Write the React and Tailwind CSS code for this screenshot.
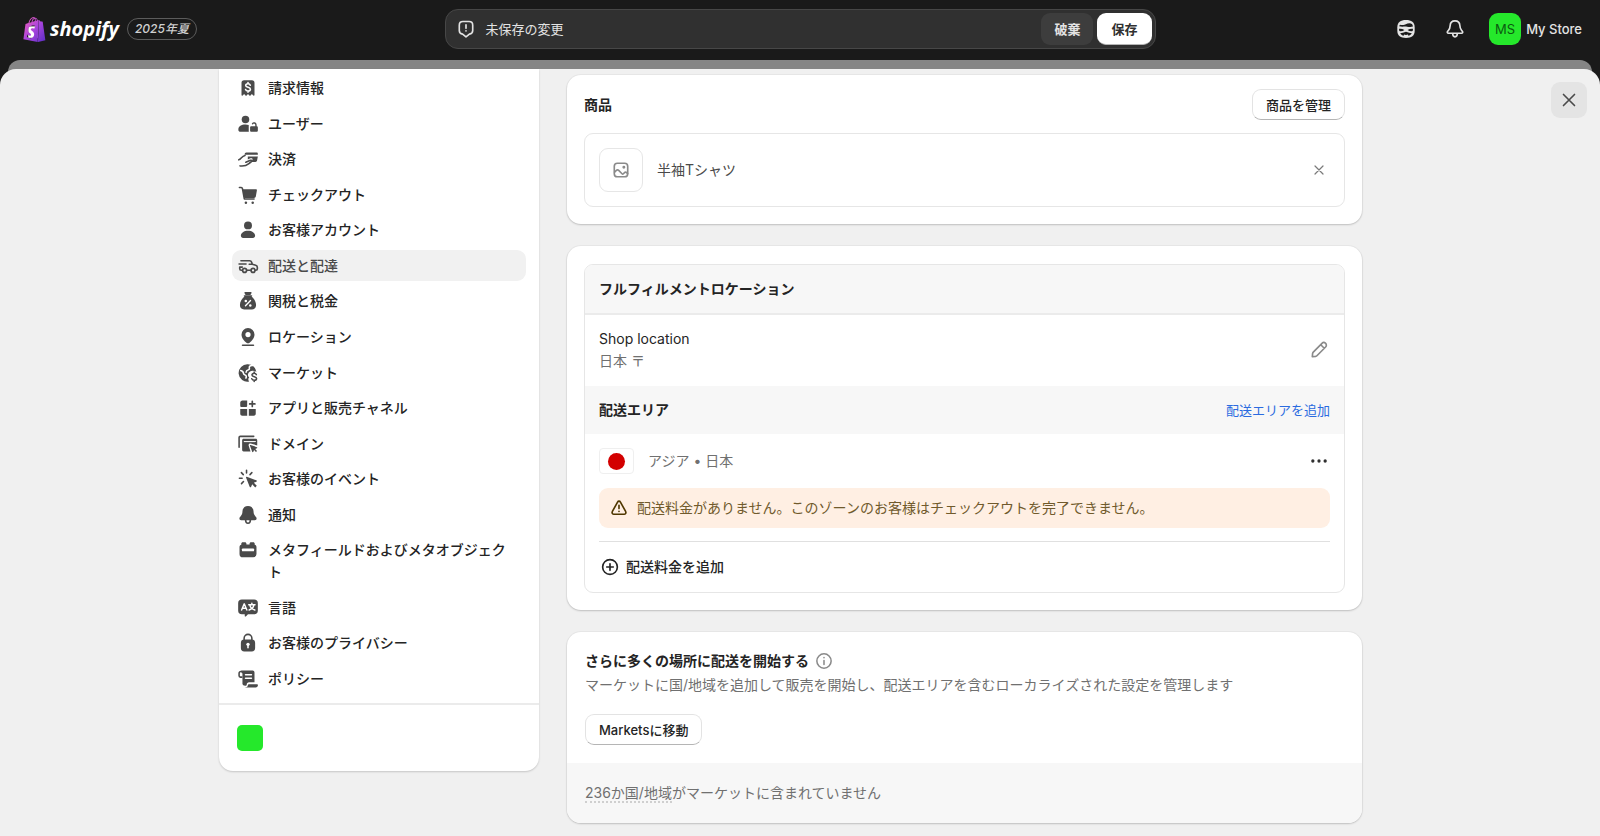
import { SiShopify } from 'react-icons/si';

const Svg = ({ children, className = 'size-[22px]' }) => (
  <svg viewBox="0 0 20 20" className={`${className} shrink-0`} fill="currentColor" aria-hidden="true">
    {children}
  </svg>
);

const NavSvg = ({ children }) => (
  <svg viewBox="-0.5 -0.5 21 21" className="size-[22px] shrink-0" fill="currentColor" aria-hidden="true">
    {children}
  </svg>
);

const Line = ({ children, className, width = 1.5 }) => (
  <svg
    viewBox="0 0 20 20"
    className={`${className || 'size-[22px]'} shrink-0`}
    fill="none"
    stroke="currentColor"
    strokeWidth={width}
    strokeLinecap="round"
    strokeLinejoin="round"
    aria-hidden="true"
  >
    {children}
  </svg>
);

const ReceiptIcon = () => (
  <NavSvg>
    <path d="M6.300 2.500h7.400a2.500 2.500 0 0 1 2.500 2.500v11.600c0 .6-.7.9-1.100.5l-1.400-1.300-1.300 1.300a.8.8 0 0 1-1.100 0L10 15.800l-1.300 1.300a.8.8 0 0 1-1.100 0l-1.300-1.300-1.400 1.300c-.4.4-1.100.1-1.100-.5V5a2.500 2.500 0 0 1 2.500-2.500z" />
    <path d="M12.200 7.300c-.3-.9-1.200-1.400-2.200-1.400-1.200 0-2.200.6-2.200 1.700 0 2.400 4.500 1.100 4.500 3.500 0 1.100-1.100 1.700-2.300 1.700-1.100 0-2-.5-2.300-1.400M10 4.700v1.200M10 12.800v1.200" fill="none" stroke="#fff" strokeWidth="1.500" strokeLinecap="round" />
  </NavSvg>
);

const UsersIcon = () => (
  <NavSvg>
    <circle cx="7.600" cy="5.800" r="3.600" />
    <path d="M.8 15.200c0-3 2.800-4.700 6.800-4.700 1.200 0 2.200.2 3.100.5v5.700c0 .3.100.6.200.8H2.800c-1.100 0-2-.8-2-1.700z" />
    <path d="M12 13.400c0-.7.500-1.200 1.200-1.200h5c.7 0 1.200.5 1.200 1.200v2.900c0 .7-.5 1.200-1.200 1.200h-5c-.7 0-1.200-.5-1.200-1.200z" />
    <path d="M17.600 12.500v-1.800a1.800 1.800 0 0 0-3.300-.9" fill="none" stroke="currentColor" strokeWidth="1.300" strokeLinecap="round" />
  </NavSvg>
);

const PaymentIcon = () => (
  <NavSvg>
    <path d="M8.400 3.900h9.800c.7 0 1.200.5 1.200 1.200v.8H6.700c.2-1.200.7-2 1.700-2z" />
    <path d="M9.800 7.500h9.600l-.7 3.800c-.1.900-.8 1.500-1.600 1.500h-4.300c1.100-1 1.900-2.200 1.400-3-.6-.9-2.400-.2-4.400.7z" />
    <path d="M1.200 10.800c2.200-.5 2.600-3.500 6-4.200M2.400 16.600c6.300.9 7.200-1.500 10.200-3.500 1.500-1 1.200-2.300-.3-1.800l-4.400 1.800" fill="none" stroke="currentColor" strokeWidth="1.500" strokeLinecap="round" />
  </NavSvg>
);

const CartIcon = () => (
  <NavSvg>
    <path d="M1.800 2.900h1.700c.6 0 1.100.4 1.200 1L6.500 13.800h9.300" fill="none" stroke="currentColor" strokeWidth="1.500" strokeLinecap="round" strokeLinejoin="round" />
    <path d="M4.900 4.400h12.700c.6 0 1 .5.900 1.100l-1 5.800c-.1.900-.9 1.500-1.700 1.500H6.400z" />
    <circle cx="8" cy="17.300" r="1.200" />
    <circle cx="14.500" cy="17.300" r="1.200" />
  </NavSvg>
);

const PersonIcon = () => (
  <NavSvg>
    <circle cx="10" cy="5.600" r="3.800" />
    <path d="M3.200 15.600c0-3.100 3-5 6.800-5s6.800 1.900 6.800 5c0 1.200-.9 2.100-2.100 2.100H5.300c-1.200 0-2.100-.9-2.100-2.100z" />
  </NavSvg>
);

const TruckIcon = () => (
  <Line>
    <path d="M3.600 5.200h7.900c1 0 1.500.4 1.800 1.300l.6 1.900 3.100.9c1 .3 1.500 1 1.500 2v1.200c0 .8-.5 1.400-1.300 1.400h-.7M12.600 13.900H9M1.900 8.200h6.300M4.900 13.900H3.800c-.8 0-1.300-.5-1.300-1.300V11h2.300M14 8.400h-2.900" />
    <circle cx="6.900" cy="14" r="1.800" />
    <circle cx="14.600" cy="14" r="1.800" />
  </Line>
);

const TaxIcon = () => (
  <NavSvg>
    <path d="M7.300 1.300h5.400c.6 0 .9.700.6 1.200l-1 1.700H7.700l-1-1.700c-.3-.5 0-1.200.6-1.200z" />
    <path d="M5.900 5.100c0-.4.3-.7.700-.7h6.800c.4 0 .7.300.7.700 0 .5-.3.700-.7.700 2.300 2 4.300 5 4.300 8 0 2.700-1.600 4.200-4 4.200H6.300c-2.400 0-4-1.500-4-4.200 0-3 2-6 4.300-8-.4 0-.7-.2-.7-.7z" />
    <path d="m7.600 14.500 4.800-5" stroke="#fff" strokeWidth="1.300" strokeLinecap="round" />
    <circle cx="7.900" cy="10" r="1.200" fill="#fff" />
    <circle cx="12.200" cy="14.200" r="1.200" fill="#fff" />
  </NavSvg>
);

const PinIcon = () => (
  <NavSvg>
    <path fillRule="evenodd" d="M10 1.500a6.200 6.200 0 0 1 6.200 6.200c0 3.400-2.600 6.200-4.700 7.700a2.500 2.500 0 0 1-3 0C6.400 13.900 3.800 11.100 3.800 7.700A6.200 6.200 0 0 1 10 1.500zm0 3.700a2.500 2.500 0 1 0 0 5 2.500 2.500 0 0 0 0-5z" />
    <path d="M4.800 17.900h10.400" stroke="currentColor" strokeWidth="1.500" strokeLinecap="round" />
  </NavSvg>
);

const MarketIcon = () => (
  <NavSvg>
    <path d="M9.800 1.700a8.300 8.300 0 1 0 1.300 16.400c-.5-.6-.8-1.300-.8-2 0-.8.300-1.400.9-1.800-.9-.8-1.400-1.900-1.200-3.200.4-2.100 2.300-3.300 4.500-3.300 1.200 0 2.500.4 3.500 1.300A8.300 8.300 0 0 0 9.800 1.700z" />
    <path d="M14.300 2.900c-2.400-.2-3.400.9-3 2.300.3 1.100-.3 1.700-1.400 1.900-1.300.2-1.600 1.100-1.700 2.200M3 7.600c1.900.4 2.500 1.300 2.600 2.500.1 1 .7 1.400 1.600 1.700 1.300.4 1.400 1.800.8 3.100" fill="none" stroke="#fff" strokeWidth="1.500" strokeLinecap="round" />
    <path d="M17.900 11.500c-.3-.8-1.100-1.200-2.100-1.200-1.200 0-2 .6-2 1.600 0 2.200 4.400 1 4.400 3.300 0 1-1 1.700-2.300 1.700-1.100 0-1.900-.5-2.300-1.400M15.900 9.100v1.200M15.900 16.900v1.200" fill="none" stroke="currentColor" strokeWidth="1.500" strokeLinecap="round" />
  </NavSvg>
);

const AppsIcon = () => (
  <NavSvg>
    <path d="M2.600 5c0-1.200.9-2.100 2.100-2.100H9.200v5c0 .7-.5 1.200-1.200 1.200H3.800c-.7 0-1.200-.5-1.200-1.200z" />
    <path d="M2.600 10.900h6.600v6.500H4.500c-1.100 0-1.900-.8-1.900-1.900z" />
    <path d="M10.800 10.900h6.600v4.600c0 1.100-.8 1.900-1.900 1.900h-4.700z" />
    <path d="M14.100 3.600v5M11.600 6.100h5" stroke="currentColor" strokeWidth="1.600" strokeLinecap="round" />
  </NavSvg>
);

const DomainIcon = () => (
  <NavSvg>
    <path d="M1.500 13V3.900c0-.7.500-1.200 1.200-1.200h12.800" fill="none" stroke="currentColor" strokeWidth="1.500" strokeLinecap="round" />
    <path d="M4.400 6.500c0-.8.600-1.400 1.400-1.400h11.600c.8 0 1.400.6 1.400 1.400v4.900l-6.300-1.900c-1.200-.3-2.200.7-1.900 1.900l1.800 5.700H5.800c-.8 0-1.400-.6-1.400-1.400z" />
    <path d="M6 7.700h11.400" stroke="#fff" strokeWidth="1" />
    <path d="M12.400 10.900 18.500 13c.5.200.5.900 0 1.100l-1.600.7 1.700 1.800-1 1-1.800-1.800-.7 1.700c-.2.500-.9.500-1.100-.1l-2.200-6c-.1-.4.200-.7.600-.5z" />
  </NavSvg>
);

const EventsIcon = () => (
  <NavSvg>
    <path d="M8.800 7.900 17.900 11.200c.7.300.7 1.100 0 1.400l-2.300 1 2.800 2.900-1.500 1.500-2.900-2.900-1 2.400c-.3.700-1.200.6-1.400 0L8.100 8.600c-.1-.5.200-.8.700-.7z" />
    <path d="M8.600 1.700v2.600M1.800 9.200h2.600M3.700 3.900l1.800 1.900M13.700 3.900l-1.800 1.900M5.700 12.400 3.800 14.400" stroke="currentColor" strokeWidth="1.500" strokeLinecap="round" />
  </NavSvg>
);

const BellFilledIcon = () => (
  <NavSvg>
    <path d="M10 1.300c3.300 0 5.200 2.200 5.300 5.400.1 2 .4 2.900 1.700 4.500l.8 1c.9 1.200.2 2.700-1.300 2.700H3.500c-1.500 0-2.200-1.500-1.300-2.700l.8-1c1.300-1.600 1.600-2.500 1.700-4.500C4.800 3.500 6.700 1.300 10 1.300z" />
    <path d="M7.700 14.500c0 2 .9 3.300 2.300 3.300s2.300-1.300 2.300-3.300" fill="none" stroke="currentColor" strokeWidth="1.500" />
  </NavSvg>
);

const MetaIcon = () => (
  <NavSvg>
    <path d="M5 2.500h2.100c.8 0 1.400.6 1.400 1.400v.8h3v-.8c0-.8.600-1.400 1.400-1.400H15c.8 0 1.400.6 1.400 1.400v1.200c1 .3 1.700 1.100 1.700 2.200v6.500a3.200 3.200 0 0 1-3.200 3.200H5.100a3.200 3.200 0 0 1-3.200-3.200V7.300c0-1.100.7-1.900 1.700-2.200V3.900c0-.8.600-1.400 1.400-1.400z" />
    <rect x="4.200" y="8.600" width="11.600" height="2.700" rx=".8" fill="#fff" />
  </NavSvg>
);

const LanguageIcon = () => (
  <NavSvg>
    <path d="M4.200 1.900h11.600a3.600 3.600 0 0 1 3.600 3.600v6.900a3.600 3.600 0 0 1-3.600 3.600H10l-2.100 2c-.4.400-1 .2-1-.4V16H4.200A3.600 3.600 0 0 1 .6 12.400V5.500a3.600 3.600 0 0 1 3.600-3.600z" />
    <g fill="none" stroke="#fff" strokeWidth="1.400" strokeLinecap="round" strokeLinejoin="round">
      <path d="M3.900 11.900 6.400 6l2.500 5.900M4.800 10.200h3.300" />
      <path d="M10.700 7h6M13.700 5.400V7M15.600 7.300c-.5 2.300-2.100 3.900-4.500 4.600M11.800 7.300c.5 2.300 2.100 3.900 4.700 4.600" />
    </g>
  </NavSvg>
);

const LockIcon = () => (
  <NavSvg>
    <path d="M6.300 8.500V5.500a3.700 3.700 0 0 1 7.400 0v3" fill="none" stroke="currentColor" strokeWidth="1.500" />
    <rect x="3.200" y="6.700" width="13.600" height="11.300" rx="3.300" />
    <circle cx="10" cy="11.300" r="1.600" fill="#fff" />
    <path d="M10 12v2.600" stroke="#fff" strokeWidth="1.500" strokeLinecap="round" />
  </NavSvg>
);

const PolicyIcon = () => (
  <NavSvg>
    <path d="M4.700 8.200H2.700a1.200 1.200 0 0 1-1.200-1.200V4.600a1.700 1.700 0 0 1 3.400 0" fill="none" stroke="currentColor" strokeWidth="1.500" />
    <path d="M3.200 2h11.200c1 0 1.800.8 1.800 1.800v9.400H11c-1.300 0-2.200.9-2.200 2.200 0 1.500-4.100 1.300-4.100-.9V4.500c0-1.100-.5-2-1.500-2.500z" />
    <path d="M7.600 5.900h5.700M7.600 9.200h5.700" stroke="#fff" strokeWidth="1.400" strokeLinecap="round" />
    <path d="M6.900 18.100c1.600 0 2.900-.7 3-2.400 0-.5.400-.8.900-.8h7.800c.6 0 .9.300.9.900 0 1.400-.9 2.300-2.200 2.300z" />
  </NavSvg>
);

const SidekickIcon = () => (
  <Svg>
    <path d="M10 1.900c4.900 0 7.900 2.100 7.900 6.600v3.200c0 4.500-3 6.500-7.900 6.500s-7.900-2-7.900-6.500V8.500c0-4.500 3-6.600 7.900-6.600z" />
    <g fill="#1a1a1a">
      <path d="M4.600 6.100c1.300.4 3 .3 4.700-.3 2.300-.8 4.500-1.500 6-.3.700.6.900 1.400 1 2.200-1.500.6-3.300.4-5.300.2-2.500-.2-5.100.2-7.200-.3.100-.6.400-1.100.8-1.500z" />
      <path d="M3.700 9.800c1.700-.2 3.300.1 4.900 1-1.400 1-3 1.400-4.600 1-.3-.6-.4-1.300-.3-2zM16.300 9.800c-1.700-.2-3.300.1-4.900 1 1.400 1 3 1.400 4.600 1 .3-.6.400-1.300.3-2z" />
      <path d="M4.700 13.800c1.700 0 3.200-.5 5.300-1.300 2.100.8 3.600 1.300 5.300 1.300-.9 1.300-2 2-3.200 2.300l-.3-1c-1.100.6-2.500.6-3.600 0l-.3 1c-1.200-.3-2.300-1-3.200-2.300z" />
    </g>
  </Svg>
);

const BellIcon = () => (
  <Line>
    <path d="M10 2.600c2.700 0 4.300 1.800 4.400 4.300.1 2 .4 2.900 1.500 4.300l.9 1.100c.5.700.1 1.600-.8 1.600H4c-.9 0-1.300-.9-.8-1.600l.9-1.100c1.100-1.400 1.400-2.300 1.500-4.300.1-2.500 1.700-4.300 4.400-4.300zM7.900 14.200c0 1.700.8 2.900 2.100 2.900s2.100-1.200 2.100-2.900" />
  </Line>
);

const UnsavedIcon = () => (
  <Line className="size-[22px]">
    <path d="M7.200 3.200h5.600c1.900 0 3.300 1.400 3.300 3.300v4.900c0 1.800-1.200 3.100-3 3.300L10 17.100l-3.100-2.400c-1.800-.2-3-1.500-3-3.300V6.500c0-1.900 1.400-3.300 3.300-3.300zM10 6.200v3.200M10 11.700v.1" />
  </Line>
);

const CloseIcon = ({ className }) => (
  <Line className={className}>
    <path d="m5 5 10 10M15 5 5 15" />
  </Line>
);

const ImageIcon = () => (
  <Line className="size-[22px]">
    <rect x="3.900" y="3.900" width="12.200" height="12.200" rx="2.800" />
    <path d="M4.200 11.900l1.600-1.500c.6-.6 1.500-.6 2.100 0l3 3c.4.400.9.400 1.300 0l1-1c.6-.6 1.300-.6 1.900 0l.9.900" />
    <circle cx="12.600" cy="7.400" r=".6" fill="currentColor" />
  </Line>
);

const PencilIcon = () => (
  <Line>
    <path d="m3.900 16.100.3-3c.1-.5.300-.9.600-1.200l7.900-7.900a2.300 2.300 0 0 1 3.300 3.300l-7.900 7.900c-.3.300-.8.500-1.200.6zM11.600 5.200l3.200 3.200" />
  </Line>
);

const DotsIcon = () => (
  <Svg>
    <circle cx="4.400" cy="10" r="1.500" />
    <circle cx="10" cy="10" r="1.500" />
    <circle cx="15.600" cy="10" r="1.500" />
  </Svg>
);

const WarningIcon = () => (
  <Line>
    <path d="M8.700 4.600c.6-1.100 2-1.100 2.600 0l4.700 8.500c.7 1.200-.1 2.600-1.400 2.600H5.400c-1.300 0-2.100-1.400-1.400-2.600zM10 7.600v2.900M10 13v.1" />
  </Line>
);

const PlusCircleIcon = () => (
  <Line className="size-[22px]">
    <circle cx="10" cy="10" r="6.700" />
    <path d="M10 7v6M7 10h6" />
  </Line>
);

const InfoIcon = () => (
  <Line className="size-[22px]" width={1.400}>
    <circle cx="10" cy="10" r="6.500" />
    <path d="M10 9.600v3.500M10 6.900v.1" />
  </Line>
);

const navItems = [
  ['請求情報', ReceiptIcon],
  ['ユーザー', UsersIcon],
  ['決済', PaymentIcon],
  ['チェックアウト', CartIcon],
  ['お客様アカウント', PersonIcon],
  ['配送と配達', TruckIcon, true],
  ['関税と税金', TaxIcon],
  ['ロケーション', PinIcon],
  ['マーケット', MarketIcon],
  ['アプリと販売チャネル', AppsIcon],
  ['ドメイン', DomainIcon],
  ['お客様のイベント', EventsIcon],
  ['通知', BellFilledIcon],
  ['メタフィールドおよびメタオブジェクト', MetaIcon],
  ['言語', LanguageIcon],
  ['お客様のプライバシー', LockIcon],
  ['ポリシー', PolicyIcon],
];

function ShopifyLogo() {
  return (
    <a href="#home" className="flex items-center gap-[3px] text-white">
      <svg viewBox="0 0 24 24" className="size-[25px]" aria-hidden="true">
        <defs>
          <linearGradient id="bag" x1="0" y1="0" x2="1" y2="1">
            <stop offset="0.1" stopColor="#e85bbd" />
            <stop offset="0.5" stopColor="#a945dd" />
            <stop offset="1" stopColor="#5a2cc4" />
          </linearGradient>
        </defs>
        <path d="M6 9h9v11H6z" fill="#fff" />
        <SiShopify size={24} style={{ fill: 'url(#bag)' }} />
      </svg>
      <span className="font-['Open_Sans'] text-[20px] leading-7 font-bold italic">shopify</span>
    </a>
  );
}

function TopBar() {
  return (
    <header className="grid h-[60px] grid-cols-[1fr_minmax(0,711px)_1fr] items-center px-[18px] pb-[2px] text-[#e3e3e3]">
      <div className="flex items-center gap-2 pl-1">
        <ShopifyLogo />
        <span className="rounded-full border border-[#5c5c5c] px-[7px] text-[12px] leading-[20px] font-medium italic text-[#d0d0d0]">
          2025年夏
        </span>
      </div>
      <div className="flex h-10 items-center rounded-[13px] border border-[#474747] bg-[#303030] pr-[3px] pl-[9px]">
        <UnsavedIcon />
        <p className="flex-1 pl-[9px] text-[13px]">未保存の変更</p>
        <button type="button" className="h-8 rounded-[9px] bg-[#3d3d3d] px-[13px] text-[13px] font-bold">
          破棄
        </button>
        <button type="button" className="ml-1 h-8 rounded-[9px] border-b border-[#b5b5b5] bg-white px-[14px] text-[13px] font-bold text-[#303030]">
          保存
        </button>
      </div>
      <div className="flex items-center justify-end">
        <button type="button" aria-label="Sidekick">
          <SidekickIcon />
        </button>
        <button type="button" aria-label="通知" className="ml-[27px]">
          <BellIcon />
        </button>
        <button type="button" className="ml-[23px] flex items-center gap-[5px] text-[13px] font-medium">
          <span className="grid size-8 place-items-center rounded-[9px] bg-[#25e82b] font-normal text-[#0b5a10]">MS</span>
          My Store
        </button>
      </div>
    </header>
  );
}

function Sidebar() {
  return (
    <aside className="rounded-b-[14px] bg-white shadow-[0_1px_2px_#0000002e]">
      <nav aria-label="設定">
        <ul className="flex min-h-[634px] flex-col justify-between px-[13px] pt-[3px] pb-[9px]">
          {navItems.map(([label, Icon, active]) => (
            <li key={label}>
              <a
                href={`#${label}`}
                aria-current={active ? 'page' : undefined}
                className={`flex gap-[9px] rounded-[9px] pt-[5px] pr-3 pb-1 pl-[5px] font-medium ${
                  active ? 'bg-[#f1f1f1] text-[#4a4a4a]' : 'text-[#242424]'
                }`}
              >
                <span className="text-[#4a4a4a]">
                  <Icon />
                </span>
                {label}
              </a>
            </li>
          ))}
        </ul>
      </nav>
      <div className="border-t-2 border-[#ebebeb] px-[18px] py-5">
        <span className="block size-[26px] rounded-[5px] bg-[#25e82b]" />
      </div>
    </aside>
  );
}

const card = 'rounded-[14px] bg-white shadow-[0_1px_2px_#0000002e,0_0_0_1px_#e8e8e8]';
const button =
  'h-[31px] rounded-[9px] border border-[#e3e3e3] border-b-[#b5b5b5] bg-white px-[13px] text-[13px] font-medium text-[#242424]';

function ProductsCard() {
  return (
    <section className={`${card} px-[17px] pt-[14px] pb-[17px]`}>
      <div className="flex items-center justify-between">
        <h2 className="font-bold">商品</h2>
        <button type="button" className={button}>商品を管理</button>
      </div>
      <div className="mt-[13px] flex items-center rounded-[9px] border border-[#e6e6e6] p-[14px]">
        <span className="grid size-[44px] place-items-center rounded-[9px] border border-[#e6e6e6] text-[#8a8a8a]">
          <ImageIcon />
        </span>
        <p className="flex-1 pl-[14px] text-[#4a4a4a]">半袖Tシャツ</p>
        <button type="button" aria-label="削除" className="grid size-[22px] place-items-center text-[#7a7a7a]">
          <CloseIcon className="size-4" />
        </button>
      </div>
    </section>
  );
}

function LocationCard() {
  return (
    <section className={`${card} p-[17px] pt-[18px]`}>
      <div className="overflow-hidden rounded-[9px] border border-[#e6e6e6]">
        <h2 className="border-b-2 border-[#ebebeb] bg-[#f7f7f7] px-[14px] py-[13px] font-bold">フルフィルメントロケーション</h2>
        <div className="flex items-center justify-between px-[14px] pt-[13px] pb-[14px]">
          <div>
            <p>Shop location</p>
            <p className="text-[#707070]">日本 〒</p>
          </div>
          <button type="button" aria-label="編集" className="text-[#8a8a8a]">
            <PencilIcon />
          </button>
        </div>
        <div className="flex items-center justify-between bg-[#f7f7f7] px-[14px] py-[13px]">
          <h3 className="font-bold">配送エリア</h3>
          <a href="#add-zone" className="text-[13px] text-[#2b6be0]">配送エリアを追加</a>
        </div>
        <div className="p-[14px]">
          <div className="flex items-center">
            <span className="grid h-[26px] w-[35px] place-items-center rounded-[4px] border border-[#efefef]">
              <span className="size-[17px] rounded-full bg-[#d30000]" />
            </span>
            <p className="flex-1 pl-[14px] text-[#707070]">アジア • 日本</p>
            <button type="button" aria-label="その他の操作" className="text-[#303030]">
              <DotsIcon />
            </button>
          </div>
          <div role="status" className="mt-[14px] flex h-10 items-center gap-[7px] rounded-[9px] bg-[#ffefe3] px-[9px] text-[#4f3700]">
            <WarningIcon />
            <p className="text-[#705a2c]">配送料金がありません。このゾーンのお客様はチェックアウトを完了できません。</p>
          </div>
          <button
            type="button"
            className="mt-[13px] flex w-full items-center gap-[5px] border-t border-[#e0e0e0] pt-[14px] font-medium"
          >
            <PlusCircleIcon />
            配送料金を追加
          </button>
        </div>
      </div>
    </section>
  );
}

function MarketsCard() {
  return (
    <section className={`${card} overflow-hidden`}>
      <div className="p-[18px]">
        <div className="flex items-center gap-1">
          <h2 className="font-bold">さらに多くの場所に配送を開始する</h2>
          <button type="button" aria-label="詳細" className="text-[#8a8a8a]">
            <InfoIcon />
          </button>
        </div>
        <p className="mt-[2px] text-[#707070]">
          マーケットに国/地域を追加して販売を開始し、配送エリアを含むローカライズされた設定を管理します
        </p>
        <button type="button" className={`${button} mt-[18px]`}>Marketsに移動</button>
      </div>
      <p className="bg-[#f7f7f7] px-[18px] py-[19px] text-[#707070]">
        <span className="border-b-2 border-dotted border-[#cfcfcf]">236か国/地域</span>がマーケットに含まれていません
      </p>
    </section>
  );
}

export default function App() {
  return (
    <div className="flex min-h-screen flex-col bg-[#1a1a1a] font-['Inter','Noto_Sans_CJK_JP',sans-serif] text-[14px] leading-[22px] text-[#242424]" lang="ja">
      <TopBar />
      <div className="mx-2 h-5 rounded-t-[12px] bg-[#858585]" />
      <main className="relative -mt-[11px] flex flex-1 items-start rounded-t-[16px] bg-[#f0f0f0] pr-[13px] pl-[30px]">
        <div className="flex min-w-0 flex-1 justify-center">
          <div className="grid w-full max-w-[1143px] grid-cols-[320px_minmax(0,1fr)] items-start gap-7">
            <Sidebar />
            <div className="flex flex-col gap-[22px] pt-[6px] pb-3">
              <ProductsCard />
              <LocationCard />
              <MarketsCard />
            </div>
          </div>
        </div>
        <button type="button" aria-label="閉じる" className="mt-[13px] grid size-9 place-items-center rounded-[9px] bg-[#e4e4e4] text-[#4a4a4a]">
          <CloseIcon className="size-[22px]" />
        </button>
      </main>
    </div>
  );
}
